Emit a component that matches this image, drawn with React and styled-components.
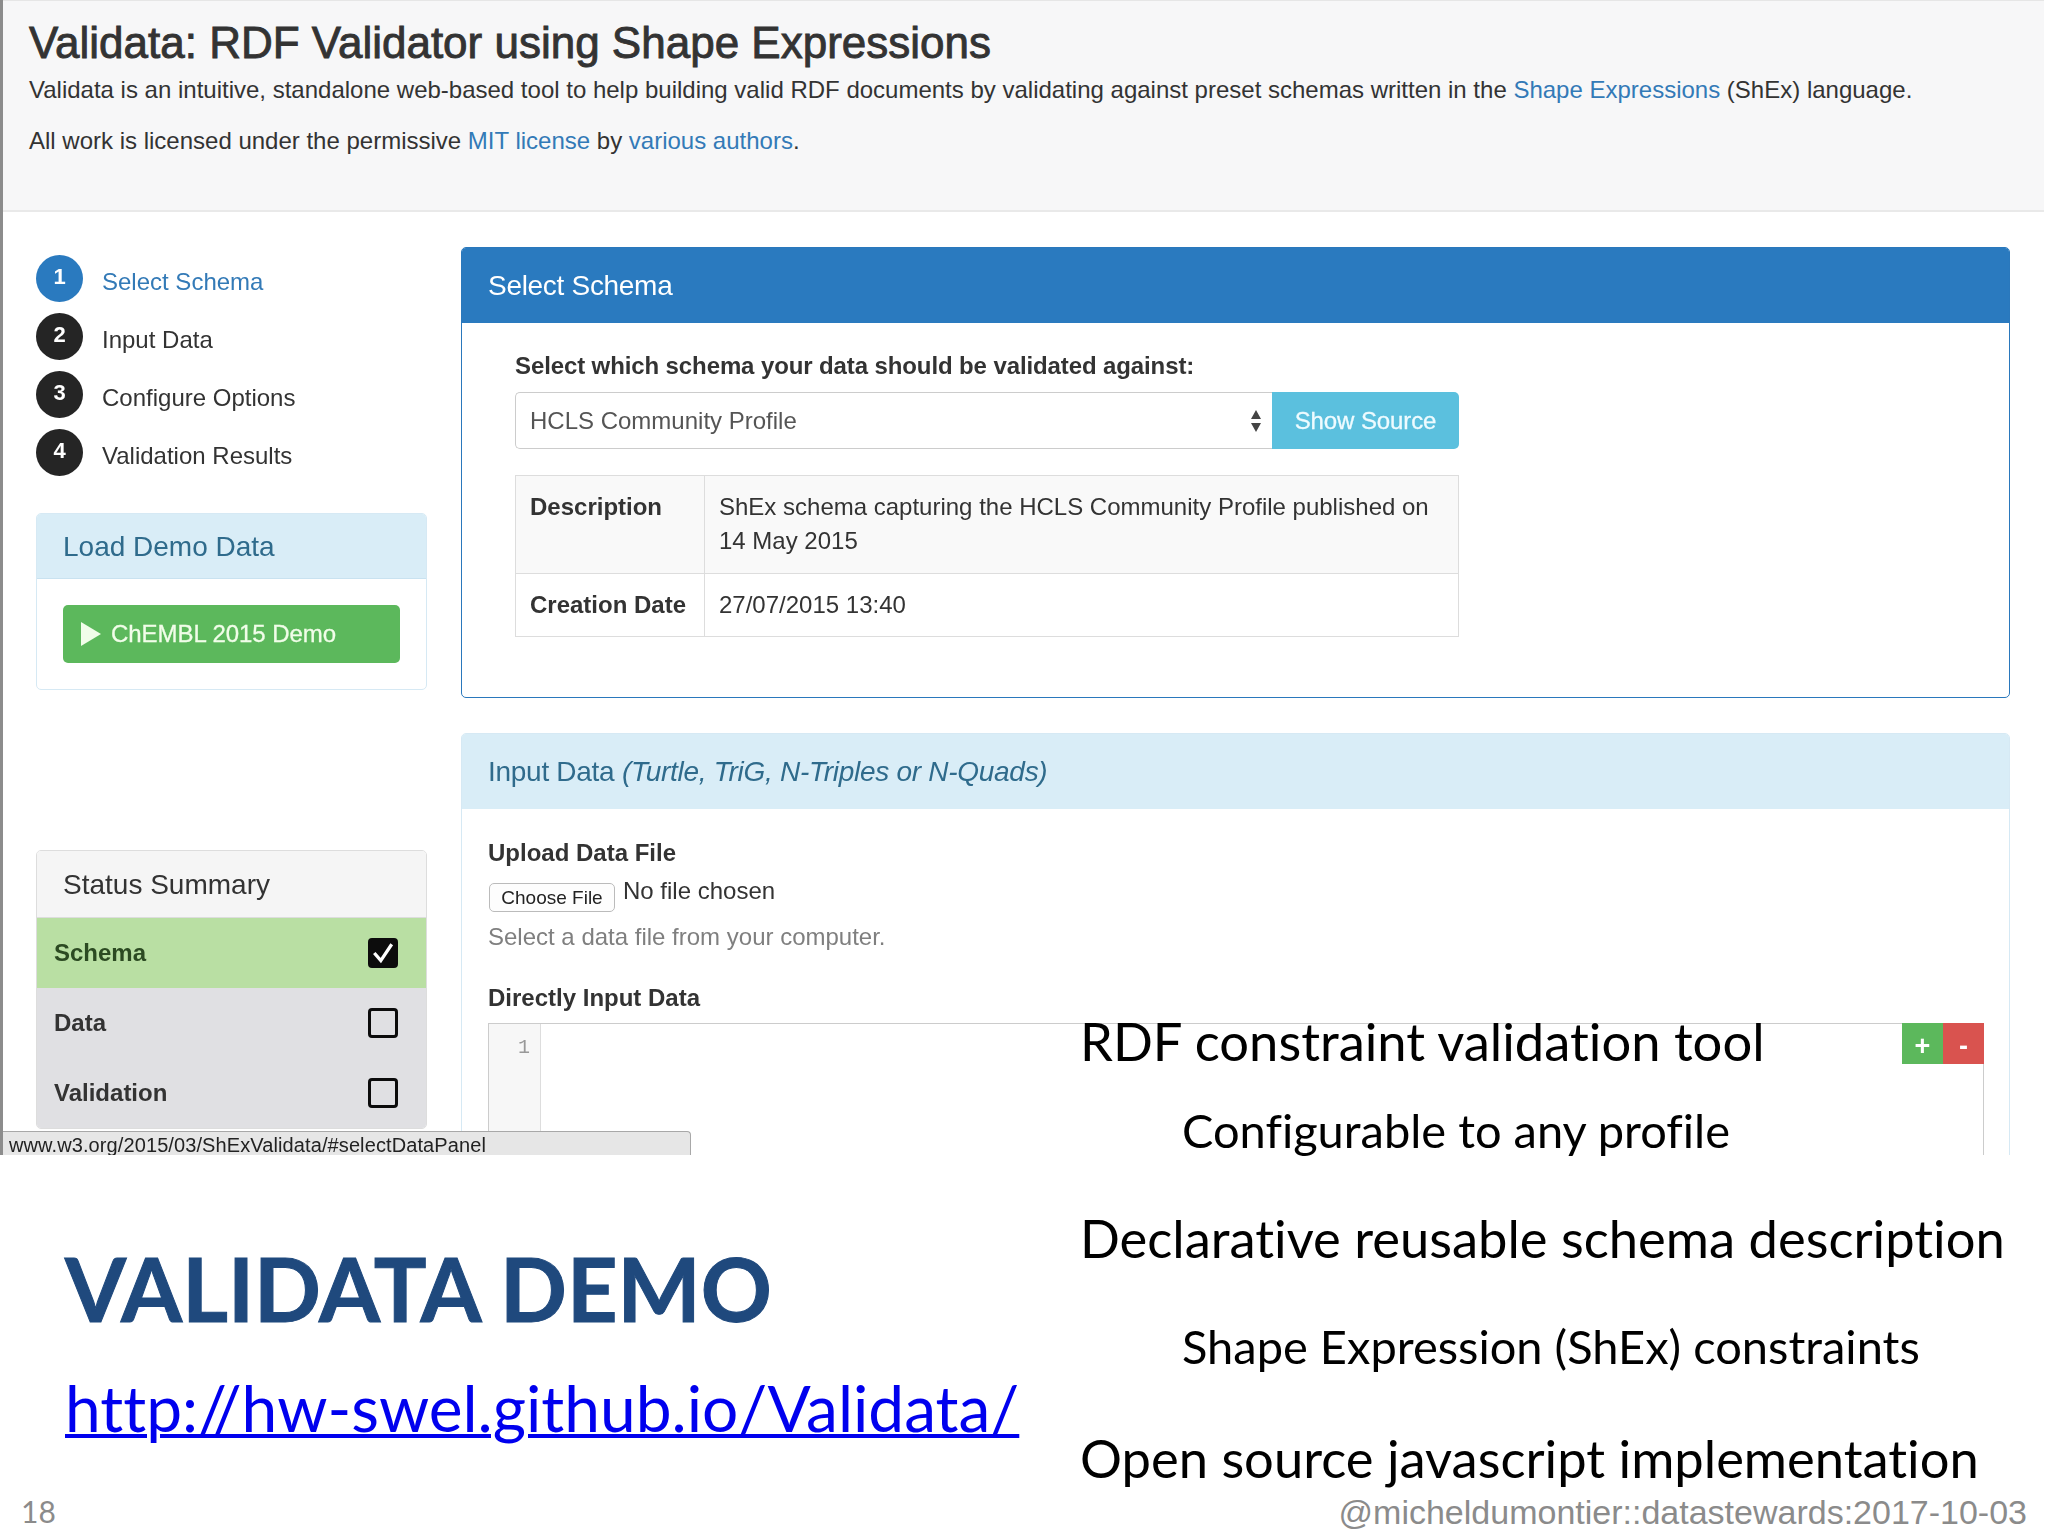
import React from "react";
import styled, { createGlobalStyle } from "styled-components";

const GlobalStyle = createGlobalStyle`
  html, body {
    margin: 0;
    padding: 0;
    background: #fff;
  }
  * {
    box-sizing: border-box;
  }
`;

const Page = styled.div`
  position: relative;
  width: 2048px;
  height: 1536px;
  overflow: hidden;
  background: #fff;
`;

const Capture = styled.div`
  position: relative;
  height: 1155px;
  overflow: hidden;
  border-left: 3px solid #8c8c8c;
  font-family: "Liberation Sans", Arial, sans-serif;
  font-size: 24px;
  color: #333;
  filter: blur(0.5px);
`;

const Jumbotron = styled.header`
  height: 212px;
  margin-right: 4px;
  padding: 19px 26px 0;
  background: #f7f7f8;
  border-top: 1px solid #e6e6e6;
  border-bottom: 2px solid #e9e9e9;
`;

const Title = styled.h1`
  margin: 0 0 10px;
  font-size: 44px;
  line-height: 46px;
  font-weight: 400;
  color: #333;
  -webkit-text-stroke: 0.9px #333;
`;

const Lead = styled.p`
  margin: 0 0 23px;
  line-height: 28px;
  font-size: 24px;
`;

const Link = styled.a`
  color: #337ab7;
  text-decoration: none;
`;

const Content = styled.div`
  display: flex;
  align-items: flex-start;
  gap: 34px;
  padding: 35px 0 0 33px;
`;

const Sidebar = styled.aside`
  width: 391px;
  padding-top: 8px;
`;

const Steps = styled.ol`
  display: flex;
  flex-direction: column;
  gap: 11px;
  margin: 0 0 37px;
  padding: 0;
  list-style: none;
`;

const Step = styled.li`
  display: flex;
  align-items: center;
  gap: 19px;
  height: 47px;
  color: ${(p) => (p.$active ? "#337ab7" : "#333")};
`;

const StepLabel = styled.span`
  padding-top: 6px;
`;

const StepNumber = styled.span`
  display: flex;
  align-items: center;
  justify-content: center;
  width: 47px;
  height: 47px;
  padding-bottom: 3px;
  border-radius: 50%;
  background: ${(p) => (p.$active ? "#2a7abf" : "#252525")};
  color: #fff;
  font-size: 22px;
  font-weight: 700;
`;

const SidePanel = styled.section`
  overflow: hidden;
  border: 1px solid ${(p) => (p.$tone === "info" ? "#d6e9f4" : "#ddd")};
  border-radius: 5px;
  background: #fff;
`;

const SideHeading = styled.h3`
  display: flex;
  align-items: center;
  height: ${(p) => p.$height}px;
  margin: 0;
  padding: 2px 26px 0;
  font-size: 28px;
  font-weight: 400;
  background: ${(p) => (p.$tone === "info" ? "#d9edf7" : "#f5f5f5")};
  color: ${(p) => (p.$tone === "info" ? "#2f6b8c" : "#333")};
  border-bottom: 1px solid ${(p) => (p.$tone === "info" ? "#c9e2f0" : "#ddd")};
`;

const DemoBody = styled.div`
  padding: 26px 26px 26px;
`;

const DemoButton = styled.button`
  display: flex;
  align-items: center;
  gap: 10px;
  width: 100%;
  height: 58px;
  padding: 0 18px;
  border: none;
  border-radius: 5px;
  background: #5cb85c;
  color: #f1fde9;
  font-family: inherit;
  font-size: 24px;
  letter-spacing: -0.05px;
  -webkit-text-stroke: 0.3px #f1fde9;
`;

const StatusPanel = styled(SidePanel)`
  margin-top: 160px;
`;

const StatusRow = styled.div`
  display: flex;
  align-items: center;
  justify-content: space-between;
  height: 70px;
  padding: 0 28px 0 17px;
  background: ${(p) => (p.$done ? "#b9dfa3" : "#e0e0e3")};
  color: ${(p) => (p.$done ? "#2c4a22" : "#333")};
  font-weight: 700;
  font-size: 24px;
`;

const CheckBox = styled.span`
  display: flex;
  align-items: center;
  justify-content: center;
  width: 30px;
  height: 30px;
  border: 3px solid #0c0c0c;
  border-radius: 4px;
  background: ${(p) => (p.$done ? "#0c0c0c" : "transparent")};
`;

const Main = styled.main`
  display: flex;
  flex-direction: column;
  gap: 35px;
  width: 1549px;
`;

const Panel = styled.section`
  border: 1px solid ${(p) => (p.$primary ? "#2a78bc" : "#d6e9f4")};
  border-radius: 5px;
  background: #fff;
  overflow: hidden;
`;

const PanelHeading = styled.h3`
  display: flex;
  align-items: center;
  height: 75px;
  margin: 0;
  padding: 0 26px;
  font-size: 28px;
  font-weight: 400;
  background: ${(p) => (p.$primary ? "#2a7abf" : "#d9edf7")};
  color: ${(p) => (p.$primary ? "#fff" : "#2f6b8c")};
  letter-spacing: ${(p) => (p.$primary ? "-0.3px" : "-0.28px")};
`;

const SchemaBody = styled.div`
  height: 374px;
  padding: 28px 0 0 53px;
`;

const Label = styled.label`
  display: block;
  font-weight: 700;
  font-size: 24px;
  line-height: 30px;
`;

const SchemaLabel = styled(Label)`
  margin-bottom: 11px;
  letter-spacing: -0.11px;
`;

const SchemaPicker = styled.div`
  display: flex;
  width: 944px;
  height: 57px;
  margin-bottom: 26px;
`;

const SelectBox = styled.div`
  display: flex;
  align-items: center;
  justify-content: space-between;
  flex: 1;
  padding: 0 10px 0 14px;
  border: 1px solid #ccc;
  border-right: none;
  border-radius: 5px 0 0 5px;
  color: #555;
`;

const SourceButton = styled.button`
  width: 187px;
  border: none;
  border-radius: 0 5px 5px 0;
  background: #5bc0de;
  color: #eefbff;
  font-family: inherit;
  font-size: 24px;
  letter-spacing: -0.1px;
  -webkit-text-stroke: 0.3px #eefbff;
`;

const SchemaTable = styled.table`
  width: 944px;
  border-collapse: collapse;
  font-size: 24px;
`;

const Row = styled.tr`
  background: ${(p) => (p.$striped ? "#f9f9f9" : "#fff")};
`;

const HeadCell = styled.th`
  width: 189px;
  height: ${(p) => p.$height}px;
  padding: 14px 14px 0;
  border: 1px solid #ddd;
  text-align: left;
  vertical-align: top;
  line-height: 34px;
  white-space: nowrap;
`;

const Cell = styled.td`
  padding: 14px 14px 0;
  border: 1px solid #ddd;
  vertical-align: top;
  line-height: 34px;
`;

const InputBody = styled.div`
  padding: 29px 26px 0;
`;

const FileRow = styled.div`
  display: flex;
  align-items: flex-start;
  gap: 8px;
  margin: 9px 0 10px 1px;
`;

const FileButton = styled.button`
  width: 126px;
  height: 29px;
  margin-top: 6px;
  padding: 0;
  border: 1px solid #bbb;
  border-radius: 5px;
  background: #fdfdfd;
  color: #222;
  font-family: inherit;
  font-size: 19px;
`;

const FileName = styled.span`
  line-height: 28px;
`;

const HelpText = styled.p`
  margin: 0 0 31px;
  color: #7f7f7f;
  line-height: 30px;
`;

const Editor = styled.div`
  position: relative;
  display: flex;
  width: 1496px;
  height: 200px;
  margin-top: 10px;
  border: 1px solid #ccc;
`;

const Gutter = styled.div`
  width: 52px;
  padding: 12px 10px 0 0;
  background: #f7f7f7;
  border-right: 1px solid #ddd;
  color: #999;
  font-family: "Liberation Mono", monospace;
  font-size: 20px;
  text-align: right;
`;

const EditorTools = styled.div`
  position: absolute;
  top: -1px;
  right: -1px;
  display: flex;
`;

const ToolButton = styled.span`
  display: flex;
  align-items: center;
  justify-content: center;
  width: 41px;
  height: 41px;
  padding-top: 5px;
  background: ${(p) => p.$bg};
  color: #fff;
  font-size: 27px;
  font-weight: 700;
`;

const StatusBar = styled.div`
  position: absolute;
  left: 0;
  bottom: 0;
  width: 688px;
  height: 24px;
  padding-left: 6px;
  background: #e6e6e6;
  border: 1px solid #a8a8a8;
  border-left: none;
  border-bottom: none;
  border-radius: 0 4px 0 0;
  color: #222;
  font-size: 20px;
  line-height: 26px;
  letter-spacing: 0.1px;
`;

const Slide = styled.div`
  height: 381px;
  padding: 78px 0 0 65px;
  font-family: Lato, "Open Sans", sans-serif;
`;

const DemoTitle = styled.h1`
  margin: 0 0 29px;
  font-size: 88px;
  line-height: 110px;
  font-weight: 700;
  color: #1f497d;
  -webkit-text-stroke: 1px #1f497d;
`;

const DemoLink = styled.a`
  display: inline-block;
  color: #0000ee;
  font-size: 64px;
  line-height: 72px;
  text-decoration: underline;
  text-decoration-thickness: 4px;
  font-variant-ligatures: none;
`;

const BulletList = styled.ul`
  position: absolute;
  left: 1080px;
  top: 1006px;
  margin: 0;
  padding: 0;
  list-style: none;
  color: #000;
  font-family: Lato, "Open Sans", sans-serif;
  font-variant-ligatures: none;
`;

const Bullet = styled.li`
  height: ${(p) => p.$height}px;
  padding-left: ${(p) => (p.$sub ? 102 : 0)}px;
  font-size: ${(p) => (p.$sub ? 47 : 52.5)}px;
  line-height: 70px;
  white-space: nowrap;
`;

const PageNumber = styled.span`
  position: absolute;
  left: 21px;
  bottom: 7px;
  color: #8b8b8b;
  font-family: Lato, sans-serif;
  font-size: 30px;
`;

const Credit = styled.span`
  position: absolute;
  right: 21px;
  bottom: 4px;
  color: #8b8b8b;
  font-family: "Liberation Sans", Arial, sans-serif;
  font-size: 34px;
`;

const PlayIcon = () => (
  <svg width="20" height="24" viewBox="0 0 20 24">
    <path d="M0 0 L20 12 L0 24 Z" fill="#f1fde9" />
  </svg>
);

const SortIcon = () => (
  <svg width="12" height="24" viewBox="0 0 12 24">
    <path d="M6 1 L11 10 H1 Z M6 23 L1 14 H11 Z" fill="#444" />
  </svg>
);

const CheckIcon = () => (
  <svg width="24" height="24" viewBox="0 0 22 22">
    <path d="M3 11 L9 18 L19 3" fill="none" stroke="#fff" strokeWidth="3" />
  </svg>
);

const steps = ["Select Schema", "Input Data", "Configure Options", "Validation Results"];

const statuses = [
  { name: "Schema", done: true },
  { name: "Data", done: false },
  { name: "Validation", done: false },
];

const bullets = [
  { text: "RDF constraint validation tool", height: 89 },
  { text: "Configurable to any profile", height: 108, sub: true },
  { text: "Declarative reusable schema description", height: 108 },
  { text: "Shape Expression (ShEx) constraints", height: 112, sub: true },
  { text: "Open source javascript implementation", height: 70 },
];

export default function App() {
  return (
    <Page>
      <GlobalStyle />
      <Capture>
        <Jumbotron>
          <Title>Validata: RDF Validator using Shape Expressions</Title>
          <Lead>
            Validata is an intuitive, standalone web-based tool to help building valid RDF
            documents by validating against preset schemas written in the{" "}
            <Link>Shape Expressions</Link> (ShEx) language.
          </Lead>
          <Lead>
            All work is licensed under the permissive <Link>MIT license</Link> by{" "}
            <Link>various authors</Link>.
          </Lead>
        </Jumbotron>
        <Content>
          <Sidebar>
            <Steps>
              {steps.map((step, i) => (
                <Step key={step} $active={i === 0}>
                  <StepNumber $active={i === 0}>{i + 1}</StepNumber>
                  <StepLabel>{step}</StepLabel>
                </Step>
              ))}
            </Steps>
            <SidePanel $tone="info">
              <SideHeading $tone="info" $height={65}>
                Load Demo Data
              </SideHeading>
              <DemoBody>
                <DemoButton>
                  <PlayIcon />
                  ChEMBL 2015 Demo
                </DemoButton>
              </DemoBody>
            </SidePanel>
            <StatusPanel>
              <SideHeading $height={67}>Status Summary</SideHeading>
              {statuses.map((s) => (
                <StatusRow key={s.name} $done={s.done}>
                  {s.name}
                  <CheckBox $done={s.done}>{s.done && <CheckIcon />}</CheckBox>
                </StatusRow>
              ))}
            </StatusPanel>
          </Sidebar>
          <Main>
            <Panel $primary>
              <PanelHeading $primary>Select Schema</PanelHeading>
              <SchemaBody>
                <SchemaLabel>Select which schema your data should be validated against:</SchemaLabel>
                <SchemaPicker>
                  <SelectBox>
                    HCLS Community Profile
                    <SortIcon />
                  </SelectBox>
                  <SourceButton>Show Source</SourceButton>
                </SchemaPicker>
                <SchemaTable>
                  <tbody>
                    <Row $striped>
                      <HeadCell $height={98}>Description</HeadCell>
                      <Cell>
                        ShEx schema capturing the HCLS Community Profile published on 14 May 2015
                      </Cell>
                    </Row>
                    <Row>
                      <HeadCell $height={63}>Creation Date</HeadCell>
                      <Cell>27/07/2015 13:40</Cell>
                    </Row>
                  </tbody>
                </SchemaTable>
              </SchemaBody>
            </Panel>
            <Panel>
              <PanelHeading>
                <span>
                  Input Data <em>(Turtle, TriG, N-Triples or N-Quads)</em>
                </span>
              </PanelHeading>
              <InputBody>
                <Label>Upload Data File</Label>
                <FileRow>
                  <FileButton>Choose File</FileButton>
                  <FileName>No file chosen</FileName>
                </FileRow>
                <HelpText>Select a data file from your computer.</HelpText>
                <Label>Directly Input Data</Label>
                <Editor>
                  <Gutter>1</Gutter>
                  <EditorTools>
                    <ToolButton $bg="#5cb85c">+</ToolButton>
                    <ToolButton $bg="#d9534f">-</ToolButton>
                  </EditorTools>
                </Editor>
              </InputBody>
            </Panel>
          </Main>
        </Content>
        <StatusBar>www.w3.org/2015/03/ShExValidata/#selectDataPanel</StatusBar>
      </Capture>
      <Slide>
        <DemoTitle>VALIDATA DEMO</DemoTitle>
        <DemoLink>http://hw-swel.github.io/Validata/</DemoLink>
      </Slide>
      <BulletList>
        {bullets.map((b) => (
          <Bullet key={b.text} $sub={b.sub} $height={b.height}>
            {b.text}
          </Bullet>
        ))}
      </BulletList>
      <PageNumber>18</PageNumber>
      <Credit>@micheldumontier::datastewards:2017-10-03</Credit>
    </Page>
  );
}
